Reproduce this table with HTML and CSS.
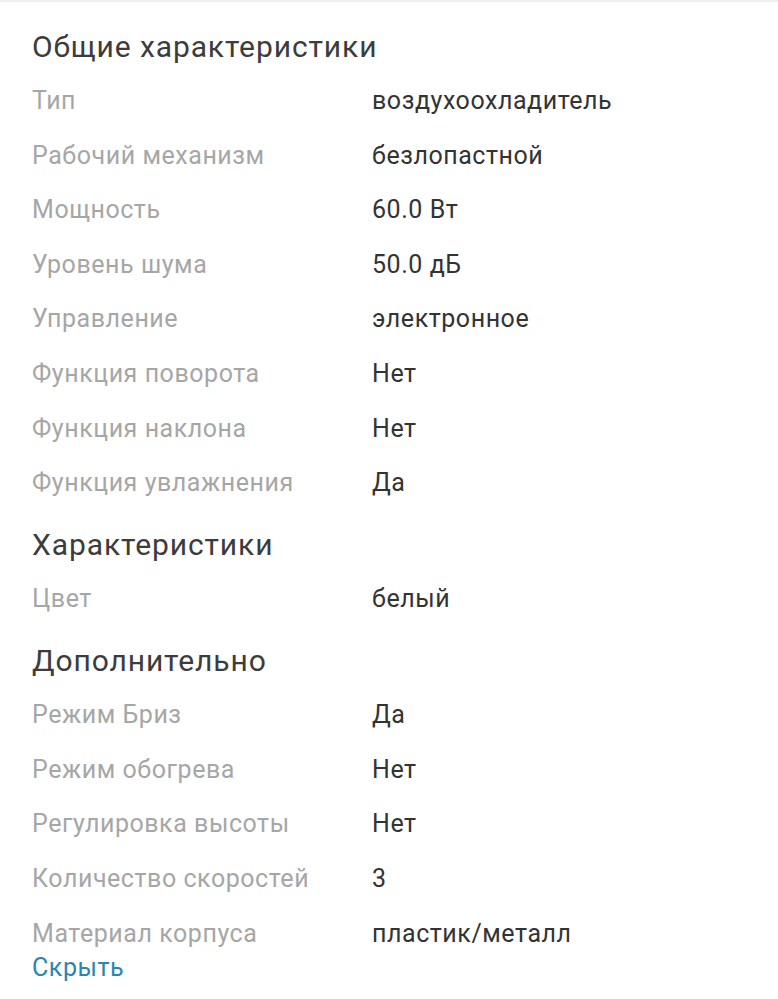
FILE: index.html
```html
<!DOCTYPE html>
<html lang="ru">
<head>
<meta charset="utf-8">
<title>Характеристики</title>
<link rel="stylesheet" href="styles.css">
</head>
<body>
<div class="specs">
  <section class="group">
    <h2 class="group-title">Общие характеристики</h2>
    <dl class="list">
      <dt>Тип</dt><dd>воздухоохладитель</dd>
      <dt>Рабочий механизм</dt><dd>безлопастной</dd>
      <dt>Мощность</dt><dd>60.0 Вт</dd>
      <dt>Уровень шума</dt><dd>50.0 дБ</dd>
      <dt>Управление</dt><dd>электронное</dd>
      <dt>Функция поворота</dt><dd>Нет</dd>
      <dt>Функция наклона</dt><dd>Нет</dd>
      <dt>Функция увлажнения</dt><dd>Да</dd>
    </dl>
  </section>
  <section class="group">
    <h2 class="group-title">Характеристики</h2>
    <dl class="list">
      <dt>Цвет</dt><dd>белый</dd>
    </dl>
  </section>
  <section class="group">
    <h2 class="group-title">Дополнительно</h2>
    <dl class="list">
      <dt>Режим Бриз</dt><dd>Да</dd>
      <dt>Режим обогрева</dt><dd>Нет</dd>
      <dt>Регулировка высоты</dt><dd>Нет</dd>
      <dt>Количество скоростей</dt><dd>3</dd>
      <dt>Материал корпуса</dt><dd>пластик/металл</dd>
    </dl>
  </section>
  <a class="toggle" href="#">Скрыть</a>
</div>
</body>
</html>
```
FILE: styles.css
```css
html, body {
  margin: 0;
  padding: 0;
  background: #fff;
}
body {
  font-family: Roboto, "Noto Sans", "Liberation Sans", sans-serif;
  border-top: 2px solid #eeeeee;
}
.specs {
  padding: 25px 32px 0 32px;
}
.group + .group {
  margin-top: 28px;
}
.group-title {
  margin: 0 0 20px 0;
  font-size: 30px;
  line-height: 40px;
  font-weight: 400;
  letter-spacing: 0.9px;
  color: #3c3c3c;
}
.list {
  margin: 0;
  display: grid;
  grid-template-columns: 340px 1fr;
  row-gap: 26.6px;
  font-size: 25px;
  line-height: 28px;
  letter-spacing: 0.55px;
}
.list dt {
  color: #a6a6a6;
}
.list dd {
  margin: 0;
  color: #333333;
}
.toggle {
  display: inline-block;
  margin-top: 6px;
  font-size: 25px;
  line-height: 28px;
  letter-spacing: 0.55px;
  color: #2a86b0;
  text-decoration: none;
}
```
